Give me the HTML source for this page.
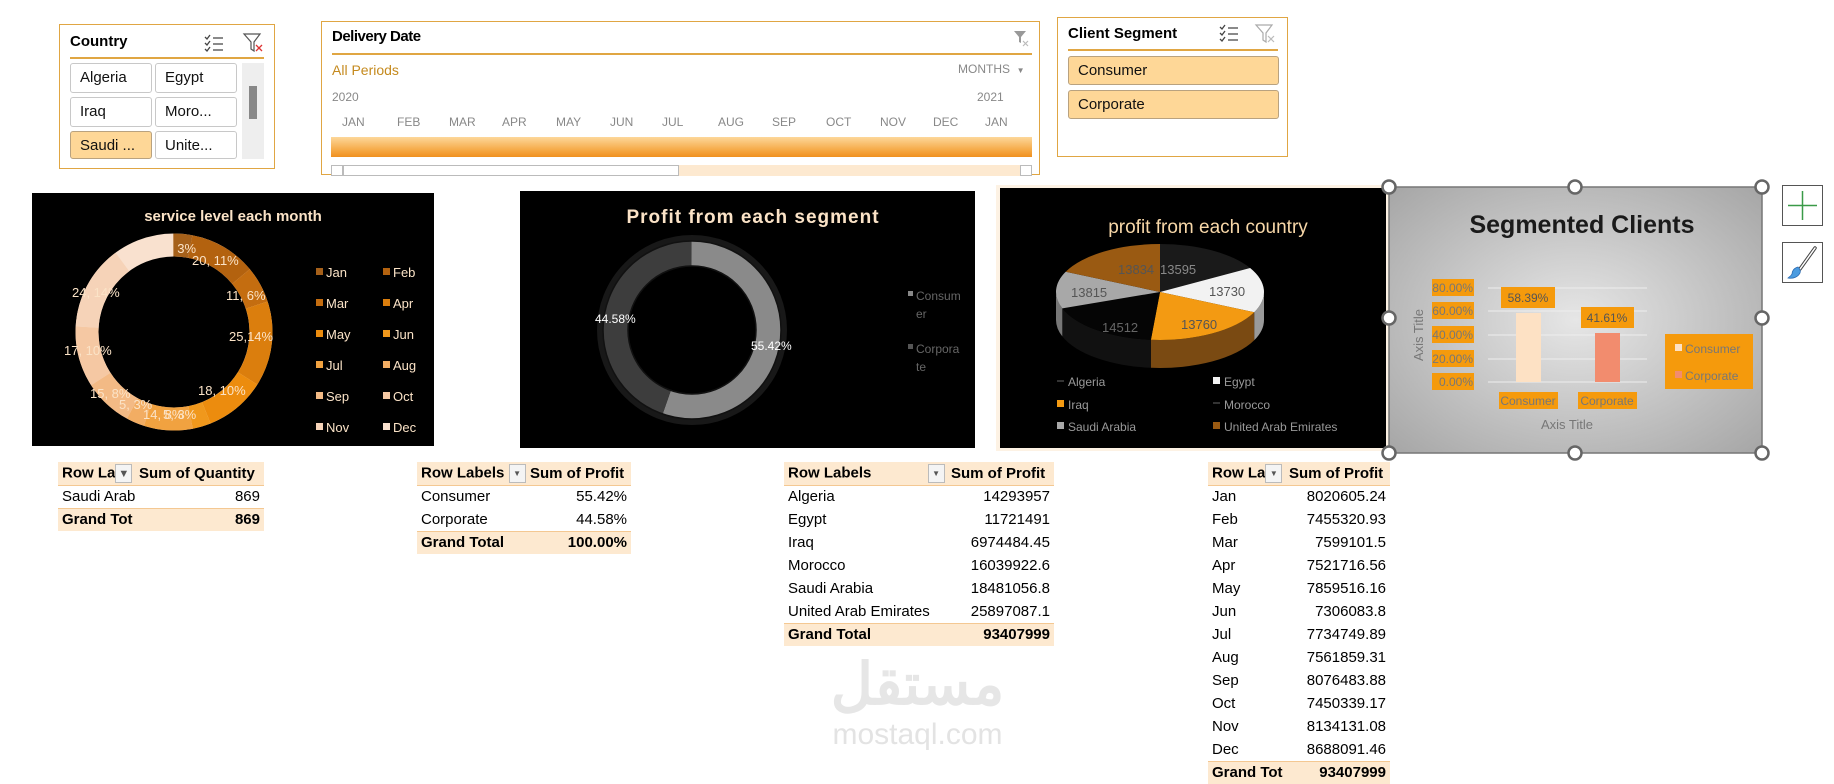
<!DOCTYPE html>
<html><head><meta charset="utf-8"><style>
*{margin:0;padding:0;box-sizing:border-box}
body{width:1834px;height:771px;overflow:hidden;background:#fff;font-family:"Liberation Sans",sans-serif;position:relative;color:#000}
.a{position:absolute}
.slicer{position:absolute;border:1px solid #e0a643;background:#fff}
.btn{position:absolute;border:1px solid #c8c8c8;border-radius:3px;font-size:15px;padding:5px 0 0 9px;color:#111;background:#fff;white-space:nowrap;overflow:hidden}
.sel{background:#fed797;border-color:#b9a27f}
table{position:absolute;border-collapse:collapse;font-size:15px}
td{height:23px;padding:0 4px;white-space:nowrap;overflow:hidden}
td.r{text-align:right}
tr.h td{background:#fde9d0;font-weight:bold;border-bottom:1px solid #f4c892}
tr.g td{background:#fde9d0;font-weight:bold;border-top:1px solid #f4c892}
.dd{display:inline-block;width:17px;height:19px;border:1px solid #bbb;background:#f4f4f4;vertical-align:middle;font-size:8px;text-align:center;line-height:18px;color:#555;font-weight:normal}
</style></head><body>

<!-- Country slicer -->
<div class="slicer" style="left:59px;top:24px;width:216px;height:145px">
 <div class="a" style="left:10px;top:8px;font-weight:bold;font-size:15px">Country</div>
 <svg class="a" style="left:143px;top:8px" width="22" height="20"><g stroke="#444" stroke-width="1.3" fill="none"><path d="M2 4l2 2 3-4M2 10l2 2 3-4M2 16l2 2 3-4"/><path d="M10 5h10M10 11h10M10 17h10"/></g></svg>
 <svg class="a" style="left:182px;top:6px" width="22" height="22"><path d="M2 3h16l-6 8v9l-3-2v-7z" fill="none" stroke="#555" stroke-width="1.2"/><path d="M14 14l6 6M20 14l-6 6" stroke="#d33" stroke-width="1.3"/></svg>
 <div class="a" style="left:10px;top:32px;width:194px;height:2px;background:#e0a643"></div>
 <div class="btn" style="left:10px;top:38px;width:82px;height:30px">Algeria</div>
 <div class="btn" style="left:95px;top:38px;width:82px;height:30px">Egypt</div>
 <div class="btn" style="left:10px;top:72px;width:82px;height:30px">Iraq</div>
 <div class="btn" style="left:95px;top:72px;width:82px;height:30px">Moro...</div>
 <div class="btn sel" style="left:10px;top:106px;width:82px;height:28px">Saudi ...</div>
 <div class="btn" style="left:95px;top:106px;width:82px;height:28px">Unite...</div>
 <div class="a" style="left:182px;top:38px;width:22px;height:96px;background:#eee"></div>
 <div class="a" style="left:189px;top:61px;width:8px;height:33px;background:#888"></div>
</div>

<!-- Delivery Date -->
<div class="slicer" style="left:321px;top:21px;width:719px;height:154px">
 <div class="a" style="left:10px;top:6px;font-weight:bold;font-size:15px;letter-spacing:-0.5px">Delivery Date</div>
 <svg class="a" style="left:690px;top:6px" width="20" height="20"><path d="M2 3h12l-5 6v6l-2-1v-5z" fill="#999"/><path d="M11 13l5 5M16 13l-5 5" stroke="#bbb" stroke-width="1.2"/></svg>
 <div class="a" style="left:10px;top:31px;width:700px;height:2px;background:#e0a643"></div>
 <div class="a" style="left:10px;top:40px;font-size:14px;color:#c58a1e">All Periods</div>
 <div class="a" style="left:636px;top:40px;font-size:12px;color:#888">MONTHS &nbsp;<span style="font-size:8px">▼</span></div>
 <div class="a" style="left:10px;top:68px;font-size:12px;color:#888">2020</div>
 <div class="a" style="left:655px;top:68px;font-size:12px;color:#888">2021</div>
 <div class="a" style="left:0;top:93px;font-size:12px;color:#888;width:719px;height:16px">
  <span class="a" style="left:20px">JAN</span><span class="a" style="left:75px">FEB</span><span class="a" style="left:127px">MAR</span><span class="a" style="left:180px">APR</span><span class="a" style="left:234px">MAY</span><span class="a" style="left:288px">JUN</span><span class="a" style="left:340px">JUL</span><span class="a" style="left:396px">AUG</span><span class="a" style="left:450px">SEP</span><span class="a" style="left:504px">OCT</span><span class="a" style="left:558px">NOV</span><span class="a" style="left:611px">DEC</span><span class="a" style="left:663px">JAN</span>
 </div>
 <div class="a" style="left:9px;top:115px;width:701px;height:20px;background:linear-gradient(#fdd79a,#f5a640 70%,#f09020);"></div>
 <div class="a" style="left:9px;top:143px;width:701px;height:11px;background:#fde9d0"></div>
 <div class="a" style="left:9px;top:143px;width:12px;height:11px;background:#fff;border:1px solid #bbb"></div>
 <div class="a" style="left:21px;top:143px;width:336px;height:11px;background:#fff;border:1px solid #bbb"></div>
 <div class="a" style="left:698px;top:143px;width:12px;height:11px;background:#fff;border:1px solid #bbb"></div>
</div>

<!-- Client Segment -->
<div class="slicer" style="left:1057px;top:17px;width:231px;height:140px">
 <div class="a" style="left:10px;top:7px;font-weight:bold;font-size:15px">Client Segment</div>
 <svg class="a" style="left:160px;top:5px" width="22" height="20"><g stroke="#444" stroke-width="1.3" fill="none"><path d="M2 4l2 2 3-4M2 10l2 2 3-4M2 16l2 2 3-4"/><path d="M10 5h10M10 11h10M10 17h10"/></g></svg>
 <svg class="a" style="left:196px;top:4px" width="22" height="22"><path d="M2 3h16l-6 8v9l-3-2v-7z" fill="none" stroke="#aaa" stroke-width="1.2"/><path d="M14 14l6 6M20 14l-6 6" stroke="#bbb" stroke-width="1.2"/></svg>
 <div class="a" style="left:10px;top:31px;width:210px;height:2px;background:#e0a643"></div>
 <div class="btn sel" style="left:10px;top:38px;width:211px;height:29px">Consumer</div>
 <div class="btn sel" style="left:10px;top:72px;width:211px;height:29px">Corporate</div>
</div>

<!-- Charts -->
<div class="a" style="left:32px;top:193px;width:402px;height:253px;background:#000"></div>
<svg class="a" style="left:0;top:0" width="1834" height="771">
 <text x="233" y="221" text-anchor="middle" font-size="15" font-weight="bold" fill="#fbe3c7" font-family="Liberation Sans">service level each month</text>
 <circle cx="174" cy="332" r="87" fill="none" stroke="#f9e1cf" stroke-width="23"/>
 <g transform="rotate(-90 174 332)" fill="none" stroke-width="23">
  <circle cx="174" cy="332" r="87" pathLength="100" stroke="#a5601a" stroke-dasharray="3 97" stroke-dashoffset="0"/>
  <circle cx="174" cy="332" r="87" pathLength="100" stroke="#b3620f" stroke-dasharray="11 89" stroke-dashoffset="-3"/>
  <circle cx="174" cy="332" r="87" pathLength="100" stroke="#c46d10" stroke-dasharray="6 94" stroke-dashoffset="-14"/>
  <circle cx="174" cy="332" r="87" pathLength="100" stroke="#db7e0d" stroke-dasharray="14 86" stroke-dashoffset="-20"/>
  <circle cx="174" cy="332" r="87" pathLength="100" stroke="#ec8c0e" stroke-dasharray="10 90" stroke-dashoffset="-34"/>
  <circle cx="174" cy="332" r="87" pathLength="100" stroke="#f0981c" stroke-dasharray="3 97" stroke-dashoffset="-44"/>
  <circle cx="174" cy="332" r="87" pathLength="100" stroke="#f1a240" stroke-dasharray="8 92" stroke-dashoffset="-47"/>
  <circle cx="174" cy="332" r="87" pathLength="100" stroke="#f2ad63" stroke-dasharray="3 97" stroke-dashoffset="-55"/>
  <circle cx="174" cy="332" r="87" pathLength="100" stroke="#f3ba85" stroke-dasharray="8 92" stroke-dashoffset="-58"/>
  <circle cx="174" cy="332" r="87" pathLength="100" stroke="#f5c8a3" stroke-dasharray="10 90" stroke-dashoffset="-66"/>
  <circle cx="174" cy="332" r="87" pathLength="100" stroke="#f6d3b8" stroke-dasharray="14 86" stroke-dashoffset="-76"/>
 </g>
 <g font-size="13" fill="#fbe3c7" font-family="Liberation Sans">
  <text x="170" y="253">, 3%</text><text x="192" y="265">20, 11%</text><text x="226" y="300">11, 6%</text>
  <text x="229" y="341">25,14%</text><text x="198" y="395">18, 10%</text><text x="163" y="419">5, 3%</text>
  <text x="143" y="419">14, 8%</text><text x="119" y="409">5, 3%</text><text x="90" y="398">15, 8%</text>
  <text x="64" y="355">17, 10%</text><text x="72" y="297">24, 14%</text>
 </g>
 <g font-size="13" fill="#fbe3c7" font-family="Liberation Sans">
  <rect x="316" y="268" width="7" height="7" fill="#a5601a"/><text x="326" y="277">Jan</text>
  <rect x="383" y="268" width="7" height="7" fill="#b3620f"/><text x="393" y="277">Feb</text>
  <rect x="316" y="299" width="7" height="7" fill="#c46d10"/><text x="326" y="308">Mar</text>
  <rect x="383" y="299" width="7" height="7" fill="#db7e0d"/><text x="393" y="308">Apr</text>
  <rect x="316" y="330" width="7" height="7" fill="#ec8c0e"/><text x="326" y="339">May</text>
  <rect x="383" y="330" width="7" height="7" fill="#f0981c"/><text x="393" y="339">Jun</text>
  <rect x="316" y="361" width="7" height="7" fill="#f1a240"/><text x="326" y="370">Jul</text>
  <rect x="383" y="361" width="7" height="7" fill="#f2ad63"/><text x="393" y="370">Aug</text>
  <rect x="316" y="392" width="7" height="7" fill="#f3ba85"/><text x="326" y="401">Sep</text>
  <rect x="383" y="392" width="7" height="7" fill="#f5c8a3"/><text x="393" y="401">Oct</text>
  <rect x="316" y="423" width="7" height="7" fill="#f6d3b8"/><text x="326" y="432">Nov</text>
  <rect x="383" y="423" width="7" height="7" fill="#f9e1cf"/><text x="393" y="432">Dec</text>
 </g>

 <!-- Chart 2 -->
 <rect x="520" y="191" width="455" height="257" fill="#000"/>
 <text x="753" y="223" text-anchor="middle" font-size="19" font-weight="bold" fill="#fbe3c7" letter-spacing="1" font-family="Liberation Sans">Profit from each segment</text>
 <circle cx="692" cy="330" r="92" fill="none" stroke="#222" stroke-width="6" opacity="0.7"/>
 <g transform="rotate(-90 692 330)" fill="none" stroke-width="25">
  <circle cx="692" cy="330" r="76.5" pathLength="100" stroke="#8a8a8a" stroke-dasharray="55.42 44.58"/>
  <circle cx="692" cy="330" r="76.5" pathLength="100" stroke="#3d3d3d" stroke-dasharray="44.58 55.42" stroke-dashoffset="-55.42"/>
 </g>
 <circle cx="692" cy="330" r="89" fill="none" stroke="#111" stroke-width="1.5"/>
 <circle cx="692" cy="330" r="64" fill="none" stroke="#111" stroke-width="1.5"/>
 <g font-size="12" fill="#fff" font-family="Liberation Sans"><text x="595" y="323">44.58%</text><text x="751" y="350">55.42%</text></g>
 <g font-size="12" fill="#666" font-family="Liberation Sans">
  <rect x="908" y="291" width="5" height="5" fill="#888"/><text x="916" y="300">Consum</text><text x="916" y="318">er</text>
  <rect x="908" y="344" width="5" height="5" fill="#555"/><text x="916" y="353">Corpora</text><text x="916" y="371">te</text>
 </g>

 <!-- Chart 3 -->
 <rect x="996" y="185" width="394" height="266" fill="#fdf2e4"/>
 <rect x="1000" y="188" width="386" height="260" fill="#000"/>
 <text x="1208" y="233" text-anchor="middle" font-size="19" fill="#f7d7a8" font-family="Liberation Sans">profit from each country</text>
 <path d="M1264 292 A104 48 0 0 1 1254.2 312.3 L1254.2 340.3 A104 48 0 0 0 1264 320Z" fill="#9a9a9a"/>
 <path d="M1254.2 312.3 A104 48 0 0 1 1150.9 339.8 L1150.9 367.8 A104 48 0 0 0 1254.2 340.3Z" fill="#7a4a12"/>
 <path d="M1150.9 339.8 A104 48 0 0 1 1062.3 308.4 L1062.3 336.4 A104 48 0 0 0 1150.9 367.8Z" fill="#111"/>
 <path d="M1062.3 308.4 A104 48 0 0 1 1056 292 L1056 320 A104 48 0 0 0 1062.3 336.4Z" fill="#777"/>
 <path d="M1160 292 L1160 244 A104 48 0 0 1 1250.1 268Z" fill="#1a1a1a"/>
 <path d="M1160 292 L1250.1 268 A104 48 0 0 1 1254.2 312.3Z" fill="#f2f2f2"/>
 <path d="M1160 292 L1254.2 312.3 A104 48 0 0 1 1150.9 339.8Z" fill="#f39a12"/>
 <path d="M1160 292 L1150.9 339.8 A104 48 0 0 1 1062.3 308.4Z" fill="#050505"/>
 <path d="M1160 292 L1062.3 308.4 A104 48 0 0 1 1065.7 271.7Z" fill="#a8a8a8"/>
 <path d="M1160 292 L1065.7 271.7 A104 48 0 0 1 1160 244Z" fill="#9a5a12"/>
 <g font-size="13" fill="#555" font-family="Liberation Sans">
  <text x="1118" y="274">13834</text><text x="1160" y="274" fill="#888">13595</text><text x="1071" y="297">13815</text>
  <text x="1209" y="296">13730</text><text x="1102" y="332" fill="#666">14512</text><text x="1181" y="329">13760</text>
 </g>
 <g font-size="12" fill="#999" font-family="Liberation Sans">
  <rect x="1057" y="380" width="7" height="2" fill="#333"/><text x="1068" y="386">Algeria</text>
  <rect x="1213" y="377" width="7" height="7" fill="#f2f2f2"/><text x="1224" y="386">Egypt</text>
  <rect x="1057" y="400" width="7" height="7" fill="#f39a12"/><text x="1068" y="409">Iraq</text>
  <rect x="1213" y="402" width="7" height="2" fill="#333"/><text x="1224" y="409">Morocco</text>
  <rect x="1057" y="422" width="7" height="7" fill="#a8a8a8"/><text x="1068" y="431">Saudi Arabia</text>
  <rect x="1213" y="422" width="7" height="7" fill="#9a5a12"/><text x="1224" y="431">United Arab Emirates</text>
 </g>

 <!-- Chart 4 -->
 <defs><radialGradient id="gg" cx="0.5" cy="0.5" r="0.7"><stop offset="0" stop-color="#e6e6e6"/><stop offset="1" stop-color="#a6a6a6"/></radialGradient></defs>
 <rect x="1389" y="187" width="373" height="266" fill="url(#gg)" stroke="#777" stroke-width="1.5"/>
 <text x="1582" y="233" text-anchor="middle" font-size="25" font-weight="bold" fill="#1a1a1a" font-family="Liberation Sans">Segmented Clients</text>
 <g stroke="#eee" stroke-width="1"><line x1="1488" y1="288" x2="1647" y2="288"/><line x1="1488" y1="311" x2="1647" y2="311"/><line x1="1488" y1="335" x2="1647" y2="335"/><line x1="1488" y1="359" x2="1647" y2="359"/><line x1="1488" y1="382" x2="1647" y2="382"/></g>
 <g fill="#f59a0c"><rect x="1432" y="279" width="42" height="17"/><rect x="1432" y="302" width="42" height="17"/><rect x="1432" y="326" width="42" height="17"/><rect x="1432" y="350" width="42" height="17"/><rect x="1432" y="373" width="42" height="17"/>
  <rect x="1501" y="287" width="54" height="21"/><rect x="1581" y="307" width="53" height="21"/><rect x="1499" y="392" width="59" height="17"/><rect x="1578" y="392" width="59" height="17"/><rect x="1665" y="334" width="88" height="55"/></g>
 <rect x="1516" y="313" width="25" height="69" fill="#fde1c4"/>
 <rect x="1595" y="333" width="25" height="49" fill="#f28c6e"/>
 <g font-size="12" fill="#777" font-family="Liberation Sans">
  <text x="1473" y="292" text-anchor="end">80.00%</text><text x="1473" y="315" text-anchor="end">60.00%</text><text x="1473" y="339" text-anchor="end">40.00%</text><text x="1473" y="363" text-anchor="end">20.00%</text><text x="1473" y="386" text-anchor="end">0.00%</text>
  <text x="1528" y="302" text-anchor="middle" fill="#555">58.39%</text><text x="1607" y="322" text-anchor="middle" fill="#555">41.61%</text>
  <text x="1528" y="405" text-anchor="middle">Consumer</text><text x="1607" y="405" text-anchor="middle">Corporate</text>
  <text x="1567" y="429" text-anchor="middle" font-size="13">Axis Title</text>
  <text transform="translate(1423 335) rotate(-90)" text-anchor="middle" font-size="13">Axis Title</text>
  <rect x="1675" y="344" width="7" height="7" fill="#fde1c4"/><text x="1685" y="353">Consumer</text>
  <rect x="1675" y="371" width="7" height="7" fill="#f28c6e"/><text x="1685" y="380">Corporate</text>
 </g>
 <g fill="#fff" stroke="#666" stroke-width="2.5">
  <circle cx="1389" cy="187" r="6.5"/><circle cx="1575" cy="187" r="6.5"/><circle cx="1762" cy="187" r="6.5"/>
  <circle cx="1389" cy="318" r="6.5"/><circle cx="1762" cy="318" r="6.5"/>
  <circle cx="1389" cy="453" r="6.5"/><circle cx="1575" cy="453" r="6.5"/><circle cx="1762" cy="453" r="6.5"/>
 </g>
 <rect x="1782.5" y="185.5" width="40" height="40" fill="#fff" stroke="#555"/>
 <path d="M1802.5 191v29M1788 205.5h29" stroke="#3a9a48" stroke-width="1.5"/>
 <rect x="1782.5" y="242.5" width="40" height="40" fill="#fff" stroke="#555"/>
 <path d="M1815 248l-15 21" stroke="#444" stroke-width="3.5" stroke-linecap="round"/><path d="M1815 248l-15 21" stroke="#fff" stroke-width="1.5" stroke-linecap="round"/>
 <path d="M1798 267c-4 1-6 4-6 7-1 2-3 3-4 4 5 1 10-1 12-5 1-2 0-4-2-6z" fill="#4a9be0" stroke="#2a6ab0" stroke-width="0.8"/>
</svg>

<!-- Tables -->
<table style="left:58px;top:462px;width:206px;table-layout:fixed">
 <col style="width:77px"><col style="width:129px">
 <tr class="h"><td>Row La<span class="dd" style="font-size:11px">&#9660;</span></td><td>Sum of Quantity</td></tr>
 <tr><td>Saudi Arab</td><td class="r">869</td></tr>
 <tr class="g"><td>Grand Tot</td><td class="r">869</td></tr>
</table>
<table style="left:417px;top:462px;width:214px;table-layout:fixed">
 <col style="width:109px"><col style="width:105px">
 <tr class="h"><td>Row Labels <span class="dd">&#9660;</span></td><td>Sum of Profit</td></tr>
 <tr><td>Consumer</td><td class="r">55.42%</td></tr>
 <tr><td>Corporate</td><td class="r">44.58%</td></tr>
 <tr class="g"><td>Grand Total</td><td class="r">100.00%</td></tr>
</table>
<table style="left:784px;top:462px;width:270px;table-layout:fixed">
 <col style="width:163px"><col style="width:107px">
 <tr class="h"><td>Row Labels <span class="dd" style="margin-left:52px">&#9660;</span></td><td>Sum of Profit</td></tr>
 <tr><td>Algeria</td><td class="r">14293957</td></tr>
 <tr><td>Egypt</td><td class="r">11721491</td></tr>
 <tr><td>Iraq</td><td class="r">6974484.45</td></tr>
 <tr><td>Morocco</td><td class="r">16039922.6</td></tr>
 <tr><td>Saudi Arabia</td><td class="r">18481056.8</td></tr>
 <tr><td>United Arab Emirates</td><td class="r">25897087.1</td></tr>
 <tr class="g"><td>Grand Total</td><td class="r">93407999</td></tr>
</table>
<table style="left:1208px;top:462px;width:182px;table-layout:fixed">
 <col style="width:77px"><col style="width:105px">
 <tr class="h"><td>Row La<span class="dd">&#9660;</span></td><td>Sum of Profit</td></tr>
 <tr><td>Jan</td><td class="r">8020605.24</td></tr>
 <tr><td>Feb</td><td class="r">7455320.93</td></tr>
 <tr><td>Mar</td><td class="r">7599101.5</td></tr>
 <tr><td>Apr</td><td class="r">7521716.56</td></tr>
 <tr><td>May</td><td class="r">7859516.16</td></tr>
 <tr><td>Jun</td><td class="r">7306083.8</td></tr>
 <tr><td>Jul</td><td class="r">7734749.89</td></tr>
 <tr><td>Aug</td><td class="r">7561859.31</td></tr>
 <tr><td>Sep</td><td class="r">8076483.88</td></tr>
 <tr><td>Oct</td><td class="r">7450339.17</td></tr>
 <tr><td>Nov</td><td class="r">8134131.08</td></tr>
 <tr><td>Dec</td><td class="r">8688091.46</td></tr>
 <tr class="g"><td>Grand Tot</td><td class="r">93407999</td></tr>
</table>

<div class="a" style="left:815px;top:655px;width:205px;text-align:center;font-family:'Liberation Sans','Noto Sans CJK SC',sans-serif;font-size:58px;font-weight:bold;color:#e6e6e6;line-height:60px">مستقل</div>
<div class="a" style="left:815px;top:718px;width:205px;text-align:center;font-size:30px;color:#e3e3e3">mostaql.com</div>
</body></html>
